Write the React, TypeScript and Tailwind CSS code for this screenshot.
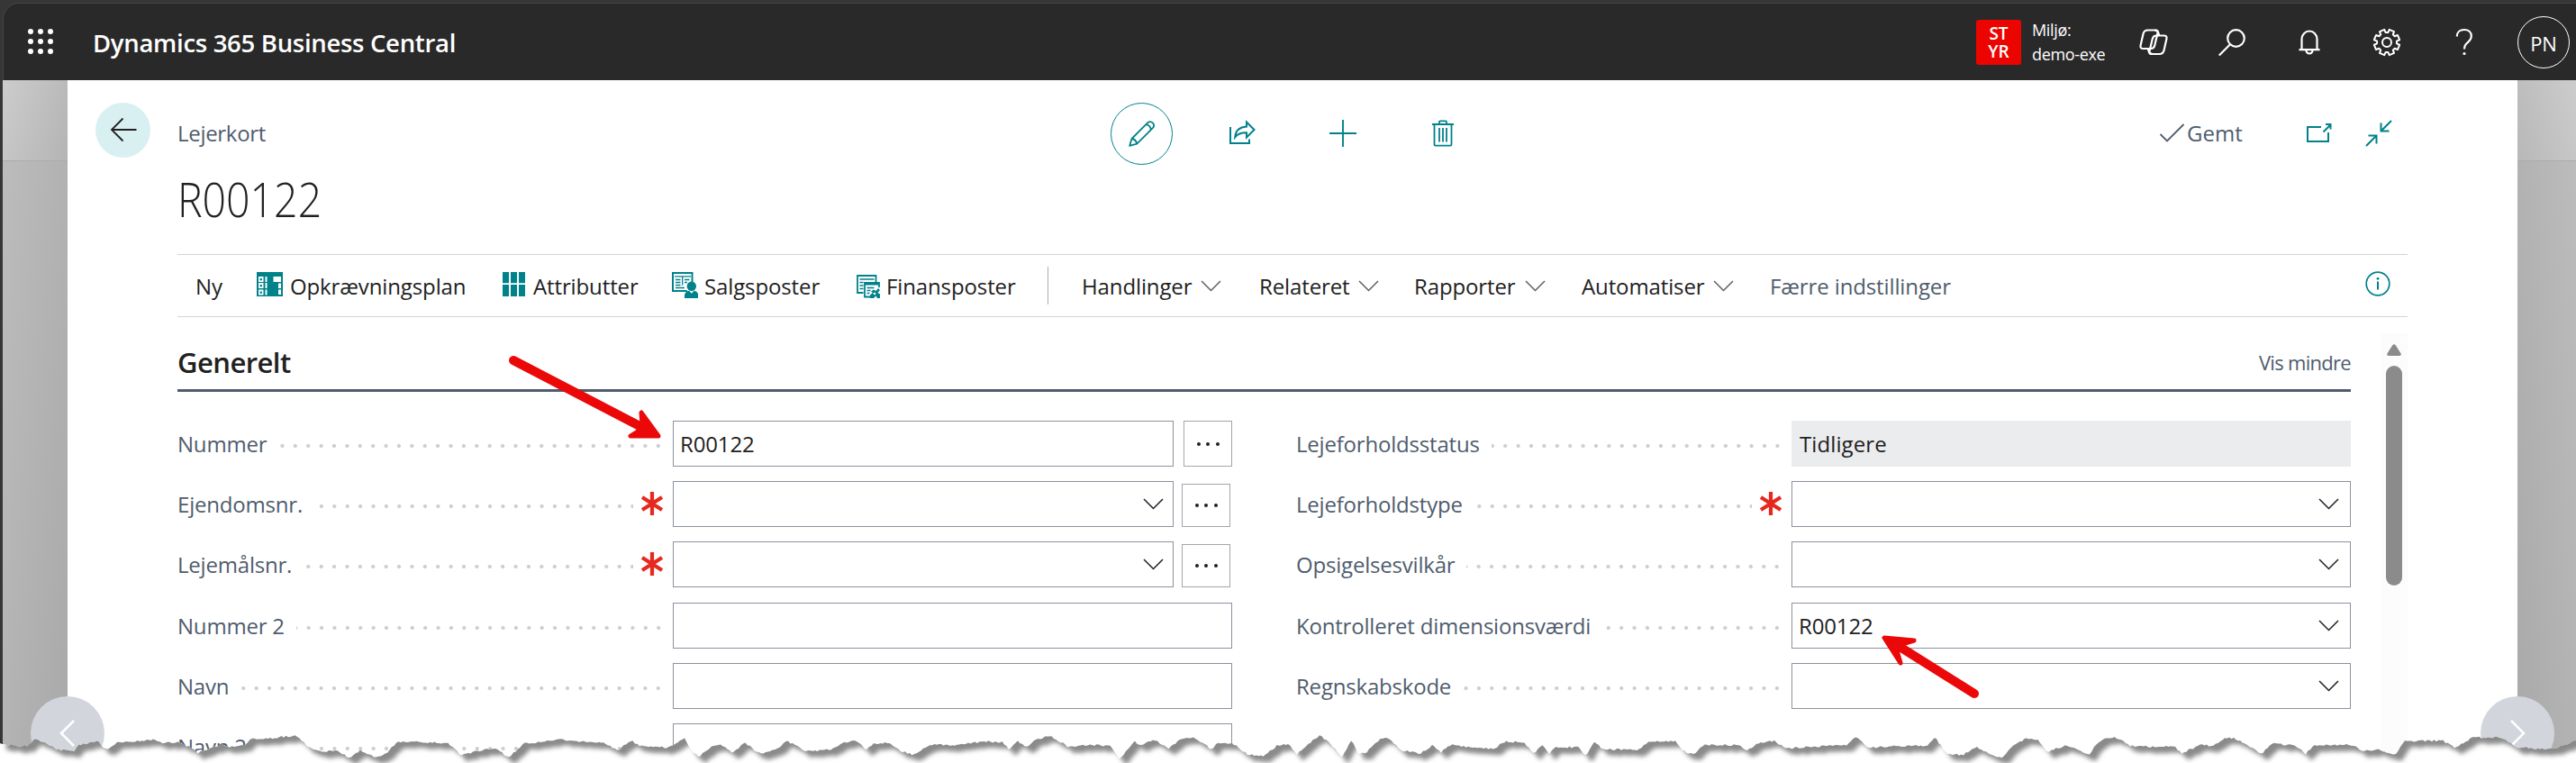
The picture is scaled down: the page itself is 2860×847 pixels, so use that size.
import * as React from "react"
import clsx from "clsx"

interface FieldProps {
  label: string
  value?: string
  required?: boolean
  dropdown?: boolean
  more?: boolean
  readOnly?: boolean
}

const leftFields: FieldProps[] = [
  { label: "Nummer", value: "R00122", more: true },
  { label: "Ejendomsnr.", required: true, dropdown: true, more: true },
  { label: "Lejemålsnr.", required: true, dropdown: true, more: true },
  { label: "Nummer 2" },
  { label: "Navn" },
  { label: "Navn 2" },
]

const rightFields: FieldProps[] = [
  { label: "Lejeforholdsstatus", value: "Tidligere", readOnly: true },
  { label: "Lejeforholdstype", required: true, dropdown: true },
  { label: "Opsigelsesvilkår", dropdown: true },
  { label: "Kontrolleret dimensionsværdi", value: "R00122", dropdown: true },
  { label: "Regnskabskode", dropdown: true },
]

// x, y pairs along the torn bottom edge
const tear = [
  0, 826, 8, 826, 23, 829, 32, 827, 39, 820, 46, 823, 55, 827, 62, 832, 83, 833, 87, 827, 94, 826, 108, 822, 115, 830, 120, 832,
  129, 824, 158, 822, 168, 821, 184, 825, 197, 824, 211, 829, 220, 836, 234, 830, 246, 827, 257, 829, 273, 827, 278, 820,
  298, 820, 312, 818, 331, 817, 342, 829, 359, 835, 374, 832, 388, 842, 400, 833, 417, 841, 427, 838, 442, 823, 471, 824,
  497, 825, 512, 838, 529, 834, 541, 831, 551, 831, 565, 841, 582, 825, 609, 823, 623, 821, 636, 823, 655, 823, 672, 825,
  686, 833, 700, 822, 711, 828, 742, 830, 760, 820, 767, 833, 776, 840, 793, 827, 803, 828, 813, 835, 827, 825, 844, 837,
  859, 833, 874, 823, 883, 827, 895, 834, 924, 832, 936, 825, 951, 822, 961, 832, 970, 825, 987, 825, 999, 833, 1014, 838,
  1031, 827, 1065, 827, 1094, 823, 1113, 824, 1121, 832, 1130, 823, 1140, 829, 1152, 820, 1167, 817, 1186, 829, 1215, 827,
  1232, 828, 1243, 842, 1260, 823, 1266, 828, 1281, 821, 1297, 831, 1314, 819, 1327, 819, 1339, 827, 1344, 833, 1351, 825,
  1368, 825, 1385, 837, 1402, 839, 1419, 827, 1431, 827, 1440, 837, 1465, 816, 1474, 823, 1490, 840, 1501, 821, 1507, 835,
  1515, 837, 1533, 820, 1542, 819, 1554, 832, 1576, 837, 1591, 827, 1600, 835, 1610, 827, 1642, 831, 1659, 831, 1671, 823,
  1691, 824, 1703, 836, 1712, 827, 1720, 837, 1727, 830, 1752, 829, 1761, 840, 1770, 823, 1780, 832, 1819, 832, 1831, 823,
  1860, 823, 1868, 833, 1880, 838, 1892, 827, 1931, 827, 1940, 833, 1950, 826, 1970, 822, 1982, 831, 2028, 828, 2050, 827,
  2061, 818, 2074, 830, 2110, 828, 2139, 828, 2149, 819, 2161, 837, 2180, 838, 2193, 829, 2210, 838, 2222, 842, 2234, 828,
  2251, 819, 2263, 822, 2272, 835, 2294, 827, 2319, 838, 2331, 822, 2348, 818, 2365, 828, 2388, 829, 2415, 829, 2422, 836,
  2443, 827, 2457, 828, 2471, 819, 2482, 820, 2500, 830, 2512, 837, 2521, 825, 2549, 828, 2560, 837, 2569, 827, 2613, 827,
  2622, 834, 2638, 832, 2659, 838, 2670, 823, 2712, 822, 2725, 830, 2744, 819, 2776, 818, 2794, 829, 2829, 832, 2842, 829,
  2860, 822,
]

function tearPoints() {
  const pts: string[] = []
  let i = 0
  for (let x = 0; x <= 2860; x += 2.5) {
    while (i < tear.length - 4 && tear[i + 2] < x) i += 2
    const t = (x - tear[i]) / (tear[i + 2] - tear[i])
    const noise = Math.sin(x * 12.9898) * 43758.5453
    const y = tear[i + 1] + (tear[i + 3] - tear[i + 1]) * t + (noise - Math.floor(noise) - 0.5) * 2.2
    pts.push(`${x},${y.toFixed(1)}`)
  }
  return pts.join(" ")
}

function TornEdge() {
  const edge = tearPoints()
  return (
    <svg className="absolute left-0 top-0" width="2860" height="847" viewBox="0 0 2860 847">
      <defs>
        <clipPath id="below">
          <polygon points={`${edge} 2860,847 0,847`} />
        </clipPath>
        <filter id="soft" x="-1%" y="-5%" width="102%" height="115%">
          <feGaussianBlur stdDeviation="2.4" />
        </filter>
      </defs>
      <g clipPath="url(#below)">
        <rect width="2860" height="847" fill="#fff" />
        <polygon points={`0,780 ${edge} 2880,780`} fill="#8a8a8a" transform="translate(7 7)" filter="url(#soft)" />
      </g>
    </svg>
  )
}

function Chevron({ className }: { className?: string }) {
  return (
    <svg className={clsx("shrink-0", className)} width="23" height="13" viewBox="0 0 23 13" fill="none" stroke="currentColor" strokeWidth="1.5">
      <path d="M1 1l10.5 10.5L22 1" />
    </svg>
  )
}

function GearIcon() {
  const pts: string[] = []
  for (let i = 0; i < 8; i++) {
    const a = (i * Math.PI) / 4 + Math.PI / 8
    const at = (r: number, d: number) => `${(16 + r * Math.cos(a + d)).toFixed(2)},${(16 + r * Math.sin(a + d)).toFixed(2)}`
    pts.push(at(11, -0.27), at(14.4, -0.2), at(14.4, 0.2), at(11, 0.27))
  }
  return (
    <svg width="32" height="32" viewBox="0 0 32 32" fill="none" stroke="#fff" strokeWidth="2" strokeLinejoin="round">
      <polygon points={pts.join(" ")} />
      <circle cx="16" cy="16" r="5" />
    </svg>
  )
}

function Header() {
  return (
    <header className="flex h-[86px] items-center rounded-tl-[18px] border-l border-t border-[#454545] bg-[#292929] text-white">
      <svg className="ml-[25px] mt-[-2px]" width="32" height="32" viewBox="0 0 32 32" fill="#fff">
        {[5, 16, 27].map((y) => [5, 16, 27].map((x) => <circle key={`${x}-${y}`} cx={x} cy={y} r="3" />))}
      </svg>
      <div className="ml-[42px] mt-[3px] text-[27.5px] font-semibold tracking-[-0.3px]">Dynamics 365 Business Central</div>

      <div className="ml-auto flex h-[50px] w-[50px] shrink-0 flex-col items-center justify-center rounded-[3px] bg-[#eb0400] text-[19px] font-semibold leading-[20px]">
        <span>ST</span>
        <span>YR</span>
      </div>
      <div className="ml-[12px] w-[120px] whitespace-nowrap text-[18px] leading-[27px] tracking-[-0.35px]">
        <div>Miljø:</div>
        <div>demo-exe</div>
      </div>

      <svg className="ml-[-2px]" width="36" height="32" viewBox="0 0 36 32" fill="none" stroke="#fff" strokeWidth="2.2">
        <path d="M11.500 2.500h7.500q3.300 0 2.500 3.200L18.200 19.500q-.9 3.500-4.200 3.500H5.500Q1.800 23 2.600 19.200L5.500 6.500Q6.500 2.500 10.500 2.500z" />
        <path d="M20.500 8.500h8q3.700 0 2.900 3.800L28.500 25q-1 4-5 4H15q-3.300 0-2.500-3.200L15.800 12q.9-3.500 4.200-3.500z" />
        <path d="M18.500 2.700q3 .3 3.700 2.500l1 3.300M15.500 28.800q-3-.3-3.700-2.500l-1-3.300" />
      </svg>
      <svg className="ml-[52px]" width="32" height="32" viewBox="0 0 32 32" fill="none" stroke="#fff" strokeWidth="2.2">
        <circle cx="20.500" cy="11.500" r="9.300" />
        <path d="M14 18.300L1.800 30.500" />
      </svg>
      <svg className="ml-[54px]" width="32" height="32" viewBox="0 0 32 32" fill="none" stroke="#fff" strokeWidth="2.2">
        <path d="M7.500 24V12.500a8.500 9 0 0 1 17 0V24M4.500 24.200h23M12.500 25a3.500 3.500 0 0 0 7 0" />
      </svg>
      <div className="ml-[54px]">
        <GearIcon />
      </div>
      <svg className="ml-[54px]" width="32" height="32" viewBox="0 0 32 32" fill="none" stroke="#fff" strokeWidth="2.2">
        <path d="M7.800 9.500c0-4.800 3.200-7.500 8-7.500s8 2.600 8 7c0 3.500-1.800 5.300-4.300 7.300-2.500 2-3.500 3.300-3.500 7.200" />
        <circle cx="16" cy="28.500" r="1.600" fill="#fff" stroke="none" />
      </svg>
      <div className="ml-[43px] mr-[7px] flex h-[58px] w-[58px] shrink-0 items-center justify-center rounded-full border-[1.5px] border-white pt-[3px] text-[22px] tracking-[-0.2px]">
        PN
      </div>
    </header>
  )
}

function PageActions() {
  return (
    <div className="flex h-[118px] items-center">
      <div className="w-[1036px] whitespace-nowrap tracking-[-0.3px] text-[#505c6d]">Lejerkort</div>
      <div className="flex h-[69px] w-[69px] items-center justify-center rounded-full border-[1.5px] border-[#00828a] text-[#00828a]">
        <svg width="30" height="30" viewBox="0 0 30 30" fill="none" stroke="currentColor" strokeWidth="1.8" strokeLinejoin="round">
          <path d="M1.200 28.800L3.500 21 21.800 2.700a4.200 4.200 0 0 1 5.700 5.700L9.200 26.700zM3.500 21c3 .3 5 2.300 5.700 5.700M19.300 5.200c3 .5 5 2.500 5.500 5.700" />
        </svg>
      </div>
      <div className="ml-[62px] flex items-center text-[#00828a]">
        <svg width="30" height="30" viewBox="0 0 30 30" fill="none" stroke="currentColor" strokeWidth="2">
          <path d="M2 8v18h21v-4.500" />
          <path d="M20 2.500l8.500 8.500-8.500 8.500v-5.200c-5.500-.2-9.500 1-12.800 5C7.800 11.800 12.500 8 20 7.500z" />
        </svg>
        <svg className="ml-[82px]" width="30" height="30" viewBox="0 0 30 30" fill="none" stroke="currentColor" strokeWidth="1.9">
          <path d="M15 0v30M0 15h30" />
        </svg>
        <svg className="ml-[81px]" width="30" height="30" viewBox="0 0 30 30" fill="none" stroke="currentColor" strokeWidth="1.8">
          <path d="M3 5h24M5.500 5v22.500q0 1.200 1.200 1.200h16.600q1.200 0 1.200-1.200V5M11 5V2.200q0-.9.900-.9h6.200q.9 0 .9.900V5M11 9v15.500M15 9v15.500M19 9v15.500" />
        </svg>
      </div>
      <div className="ml-auto flex items-center text-[#505c6d]">
        <svg width="29" height="24" viewBox="0 0 29 24" fill="none" stroke="currentColor" strokeWidth="1.8">
          <path d="M1.500 13l7.500 7.500L27.500 2" />
        </svg>
        <span className="ml-[2px] w-[132px]">Gemt</span>
      </div>
      <div className="mr-[17px] flex items-center text-[#00828a]">
        <svg width="30" height="30" viewBox="0 0 30 30" fill="none" stroke="currentColor" strokeWidth="2">
          <path d="M17 8H2v16h23V14M19.500 13.500L27.500 5.500M22 5h5.500v5.500" />
        </svg>
        <svg className="ml-[36px]" width="30" height="30" viewBox="0 0 30 30" fill="none" stroke="currentColor" strokeWidth="2">
          <path d="M29 1L18 12M17.500 3.500v9h9M1 29l11-11M3.500 17.500h9v9" />
        </svg>
      </div>
    </div>
  )
}

function Toolbar() {
  return (
    <div className="flex h-[70px] items-center whitespace-nowrap border-y border-[#d2d3d5] pl-[20px] leading-[34px] tracking-[-0.12px] text-[#212121]">
      <span className="w-[68px] pt-px">Ny</span>
      <div className="flex w-[273px] items-center gap-[8px]">
        <svg className="mt-[-3px]" width="29" height="27" viewBox="0 0 29 27" fill="#fff">
          <rect width="29" height="27" fill="#00828a" />
          {[5, 12, 19.5].map((y) => (
            <g key={y}>
              <path fillRule="evenodd" d={`M2 ${y}h5.500v6H2zM3.600 ${y + 2}h2.300v2.200H3.600z`} />
              <rect x="9.500" y={y} width="2" height="6" />
            </g>
          ))}
          <rect x="18.500" y="5" width="8.500" height="6" />
          <rect x="24" y="12.500" width="3" height="5.500" />
          <rect x="24" y="19.500" width="3" height="5.500" />
        </svg>
        <span className="pt-px">Opkrævningsplan</span>
      </div>
      <div className="flex w-[188px] items-center gap-[9px]">
        <svg className="mt-[-3px]" width="25" height="27" viewBox="0 0 25 27" fill="#00828a">
          {[0, 9, 18].map((x) => (
            <path key={x} d={`M${x} 0h7v12.200h-7zM${x} 14h7v13h-7z`} />
          ))}
        </svg>
        <span className="pt-px">Attributter</span>
      </div>
      <div className="flex w-[205px] items-center gap-[7px]">
        <svg className="mt-[-1px]" width="29" height="29" viewBox="0 0 29 29" fill="none" stroke="#00828a">
          <path d="M17 21H1V1h21.500v10" strokeWidth="2" />
          <path d="M3 4.800h18M11.700 4.800v10M4 8.500h5.500M4 11.500h5.500M4 14.500h5.500M4 17.500h10M14 8.500h5.500M14 11.500h3" strokeWidth="1.3" />
          <circle cx="21.800" cy="15.800" r="5.200" fill="#00828a" stroke="none" />
          <path d="M14 29v-4q1-3.500 5-4.200l2.800 3 2.800-3q4 .7 4.700 4.200v4z" fill="#00828a" stroke="none" />
        </svg>
        <span className="pt-px">Salgsposter</span>
      </div>
      <div className="flex w-[212px] items-center gap-[7px]">
        <svg className="mt-[2px]" width="26" height="26" viewBox="0 0 26 26" fill="none" stroke="#00828a">
          <path d="M7.500 20H1V1h20.500v7" strokeWidth="1.8" />
          <path d="M3.500 5h16M3.500 8.500h4M3.500 12h4M3.500 15.500h4" strokeWidth="1.4" />
          <path d="M16 24.500H9V9h16v5" strokeWidth="1.8" />
          <path d="M9 10h16" strokeWidth="3" />
          <path d="M11.500 14.500h8M11.500 17.500h4M11.500 20.500h3" strokeWidth="1.4" />
          <path d="M15 26v-3.500l3-2.500-2-1.500 3-2 2.500 1.500L24 15l2 2-2.500 3 2.500 1.500V26h-3l-1.500-2.500L19 26z" fill="#00828a" stroke="none" />
          <circle cx="20" cy="21" r="1.300" fill="#fff" stroke="none" />
        </svg>
        <span className="pt-px">Finansposter</span>
      </div>
      <div className="h-[42px] w-px bg-[#a9adb5]" />
      <div className="ml-[37px] flex w-[197px] items-center gap-[10px] pt-px">
        Handlinger <Chevron className="text-[#606060]" />
      </div>
      <div className="flex w-[172px] items-center gap-[10px] pt-px">
        Relateret <Chevron className="text-[#606060]" />
      </div>
      <div className="flex w-[186px] items-center gap-[10px] pt-px">
        Rapporter <Chevron className="text-[#606060]" />
      </div>
      <div className="flex w-[209px] items-center gap-[10px] pt-px">
        Automatiser <Chevron className="text-[#606060]" />
      </div>
      <span className="pt-px text-[#505c6d]">Færre indstillinger</span>
      <svg className="ml-auto mr-[19px] mt-[-5px]" width="28" height="28" viewBox="0 0 28 28" fill="none" stroke="#00828a" strokeWidth="1.7">
        <circle cx="14" cy="14" r="12.800" />
        <path d="M14 11.500v9" strokeWidth="2" />
        <circle cx="14" cy="8.300" r="1.400" fill="#00828a" stroke="none" />
      </svg>
    </div>
  )
}

function Field({ label, value, required, dropdown, more, readOnly }: FieldProps) {
  return (
    <div className="flex h-[51px] items-center">
      <div className="flex w-[550px] items-center">
        <span className="whitespace-nowrap pt-px tracking-[-0.2px] text-[#505c6d]">{label}</span>
        <div className="ml-[13px] mr-[12px] mt-[5px] h-[6px] flex-1 bg-[radial-gradient(circle_at_10.4px_50%,#cdced4_1.7px,transparent_2.4px)] bg-[length:14.4px_6px] bg-right bg-repeat-x" />
        {required && (
          <div className="relative -ml-[44px] mr-[10px] flex h-[30px] w-[34px] items-center justify-end bg-white">
            <svg className="mt-[-2px]" width="26" height="28" viewBox="0 0 26 28" stroke="#e6281e" strokeWidth="4.2">
              <path d="M13 1v26M2 7l22 14M24 7L2 21" />
            </svg>
          </div>
        )}
      </div>
      <div
        className={clsx(
          "flex h-full flex-1 items-center justify-between pl-[7px] tracking-[-0.15px] text-[#212121]",
          more ? "pr-[10px]" : "pr-[12px]",
          readOnly ? "bg-[#ebecee]" : "border border-[#8b929e] bg-white"
        )}
      >
        <span className={clsx("pt-px", readOnly && "pl-[2px] tracking-[0.1px]")}>{value}</span>
        {dropdown && <Chevron className="text-[#212121]" />}
      </div>
      {more && (
        <div
          className={clsx(
            "flex w-[54px] shrink-0 items-center justify-center gap-[6.5px] border border-[#a5a5a5]",
            dropdown ? "ml-[9px] mr-[2px] mt-[2px] h-[48px]" : "ml-[11px] h-full"
          )}
        >
          <i className="mt-px h-[4px] w-[4px] rounded-full bg-[#212121]" />
          <i className="mt-px h-[4px] w-[4px] rounded-full bg-[#212121]" />
          <i className="mt-px h-[4px] w-[4px] rounded-full bg-[#212121]" />
        </div>
      )}
    </div>
  )
}

function Scrollbar() {
  return (
    <div className="ml-[33px] mt-[18px] flex h-[477px] w-[30px] flex-col items-center bg-[#fcfcfc]">
      <svg className="mt-[12px] shrink-0" width="16" height="13" viewBox="0 0 16 13" fill="#8b8b8b">
        <path d="M6.300 1.200q1.700-2 3.400 0l5.800 9q1 2.500-1.500 2.800H2Q-.5 12.700.5 10.200z" />
      </svg>
      <div className="mt-[11px] h-[244px] w-[18px] shrink-0 rounded-full bg-[#8b8b8b]" />
    </div>
  )
}

function Arrows() {
  return (
    <svg className="absolute left-0 top-0" width="2860" height="847" viewBox="0 0 2860 847" fill="#eb0808" stroke="#eb0808" strokeLinejoin="round">
      <path d="M570 400L716 476" strokeWidth="10" strokeLinecap="round" />
      <path d="M731 484L712 458L713 472L708 479L700 484L701 484Z" strokeWidth="5" />
      <path d="M2192 770L2106 716" strokeWidth="10" strokeLinecap="round" />
      <path d="M2092 708L2125 711L2112 715L2106 722L2110 736Z" strokeWidth="5" />
    </svg>
  )
}

export default function App() {
  return (
    <div className="relative h-[847px] w-[2860px] overflow-hidden bg-[#363636] pl-[3px] pt-[3px] font-['Open_Sans','Noto_Sans',sans-serif] text-[24px]">
      <Header />
      <div className="flex h-[758px]">
        <div className="w-[72px] shrink-0">
          <div className="h-[90px] border-b border-[#acacac] bg-[linear-gradient(105deg,#cccccc,#b4b4b4)]" />
          <div className="h-[668px] bg-[linear-gradient(95deg,#bcbcbc,#a9a9a9)]" />
        </div>
        <main className="flex flex-1 bg-white pl-[31px]">
          <button className="mr-[30px] mt-[25px] flex h-[61px] w-[61px] shrink-0 items-center justify-center rounded-full bg-[#d9f0f2]">
            <svg className="mt-[-2px]" width="30" height="28" viewBox="0 0 30 28" fill="none" stroke="#212121" strokeWidth="1.8">
              <path d="M14.500 1.500L2 14l12.500 12.500M2 14h27.500" />
            </svg>
          </button>
          <div className="w-[2476px]">
            <PageActions />
            <h1 className="h-[75px] origin-left scale-x-[0.86] whitespace-nowrap text-[54px] font-light leading-[26px] text-[#212121]">R00122</h1>
            <Toolbar />
            <div className="flex">
              <section className="w-[2413px]">
                <div className="flex h-[83px] items-center justify-between border-b-[3px] border-[#505c6d] pt-[21px]">
                  <h2 className="text-[31px] font-semibold tracking-[-0.55px] text-[#212121]">Generelt</h2>
                  <span className="text-[22px] tracking-[-0.7px] text-[#505c6d]">Vis mindre</span>
                </div>
                <div className="grid grid-cols-2 gap-x-[71px] pt-[32px]">
                  <div className="flex flex-col gap-[16.2px]">
                    {leftFields.map((f) => (
                      <Field key={f.label} {...f} />
                    ))}
                  </div>
                  <div className="flex flex-col gap-[16.2px]">
                    {rightFields.map((f) => (
                      <Field key={f.label} {...f} />
                    ))}
                  </div>
                </div>
              </section>
              <Scrollbar />
            </div>
          </div>
        </main>
        <div className="w-[65px] shrink-0">
          <div className="h-[90px] border-b border-[#acacac] bg-[linear-gradient(255deg,#cccccc,#b8b8b8)]" />
          <div className="h-[668px] bg-[linear-gradient(265deg,#bcbcbc,#a9a9a9)]" />
        </div>
      </div>

      {/* previous / next record */}
      <div className="absolute left-[34px] top-[773px] flex h-[82px] w-[82px] items-center justify-center rounded-full bg-[#d2d6dc]">
        <svg width="18" height="30" viewBox="0 0 18 30" fill="none" stroke="#fff" strokeWidth="2.5">
          <path d="M16 1L2 15l14 14" />
        </svg>
      </div>
      <div className="absolute left-[2754px] top-[773px] flex h-[82px] w-[82px] items-center justify-center rounded-full bg-[#d2d6dc]">
        <svg width="18" height="30" viewBox="0 0 18 30" fill="none" stroke="#fff" strokeWidth="2.5">
          <path d="M2 1l14 14L2 29" />
        </svg>
      </div>

      <Arrows />
      <TornEdge />
    </div>
  )
}
